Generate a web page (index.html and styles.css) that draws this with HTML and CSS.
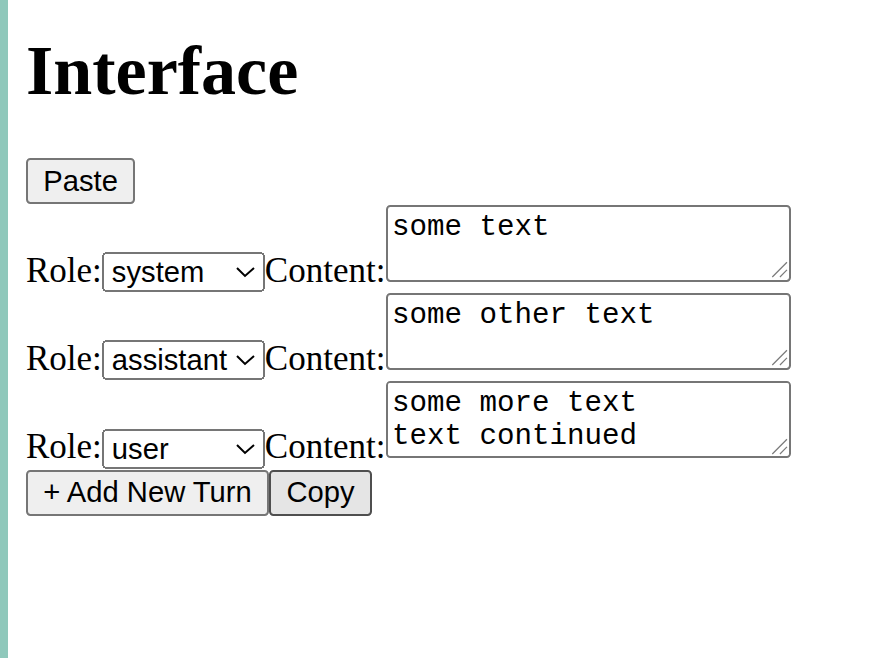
FILE: index.html
```html
<!DOCTYPE html>
<html>
<head>
<meta charset="utf-8">
<title>Interface</title>
<link rel="stylesheet" href="styles.css">
</head>
<body>
<div class="strip"></div>
<div class="page">
<h1 class="title">Interface</h1>
<div class="toolbar"><button class="btn">Paste</button></div>
<div class="turn">Role:<select class="role"><option selected>system</option><option>assistant</option><option>user</option></select>Content:<span class="field"><textarea class="content">some text</textarea><svg class="grip" viewBox="0 0 9 9"><path d="M1.5 8.2L8.2 1.5M5 8.2L8.2 5"/></svg></span></div>
<div class="turn">Role:<select class="role"><option>system</option><option selected>assistant</option><option>user</option></select>Content:<span class="field"><textarea class="content">some other text</textarea><svg class="grip" viewBox="0 0 9 9"><path d="M1.5 8.2L8.2 1.5M5 8.2L8.2 5"/></svg></span></div>
<div class="turn">Role:<select class="role"><option>system</option><option>assistant</option><option selected>user</option></select>Content:<span class="field"><textarea class="content">some more text
text continued</textarea><svg class="grip" viewBox="0 0 9 9"><path d="M1.5 8.2L8.2 1.5M5 8.2L8.2 5"/></svg></span></div>
<div class="actions"><button class="btn">+ Add New Turn</button><button class="btn btn-hover">Copy</button></div>
</div>
</body>
</html>
```

FILE: styles.css
```css
html, body {
  margin: 0;
  height: 100%;
  background: #ffffff;
}
body {
  display: flex;
  overflow: hidden;
}
.strip {
  flex: none;
  width: 8px;
  background: #8fc8bb;
}
.page {
  flex: 1;
  zoom: 2.19;
  padding: 0 8px 0 8.2px;
  font-family: "Liberation Serif", "Times New Roman", serif;
  font-size: 16px;
  color: #000;
}
.title {
  font-size: 32px;
  font-weight: bold;
  margin: 14.3px 0 21.44px;
}
.btn {
  appearance: none;
  font-family: "Liberation Sans", Arial, sans-serif;
  font-size: 13.333px;
  color: #000;
  background: #efefef;
  border: 1px solid #767676;
  border-radius: 2px;
  padding: 2px 7px;
  margin: 0;
}
.btn-hover {
  background: #e5e5e5;
  border-color: #4f4f4f;
}
.actions {
  margin-top: 0.7px;
}
.role {
  font-family: "Liberation Sans", Arial, sans-serif;
  font-size: 13.333px;
  margin: 0;
}
.field {
  display: inline-block;
  position: relative;
}
.content {
  font-family: "Liberation Mono", "Courier New", monospace;
  font-size: 13.333px;
  box-sizing: border-box;
  width: 185px;
  height: 35.2px;
  margin: 0.25px 0;
  padding: 2px;
  resize: none;
  border: 1px solid #767676;
  border-radius: 2px;
}
.grip {
  position: absolute;
  right: 1px;
  top: 25.2px;
  width: 9px;
  height: 9px;
  pointer-events: none;
  fill: none;
  stroke: #7a7a7a;
  stroke-width: 0.55;
}
```
